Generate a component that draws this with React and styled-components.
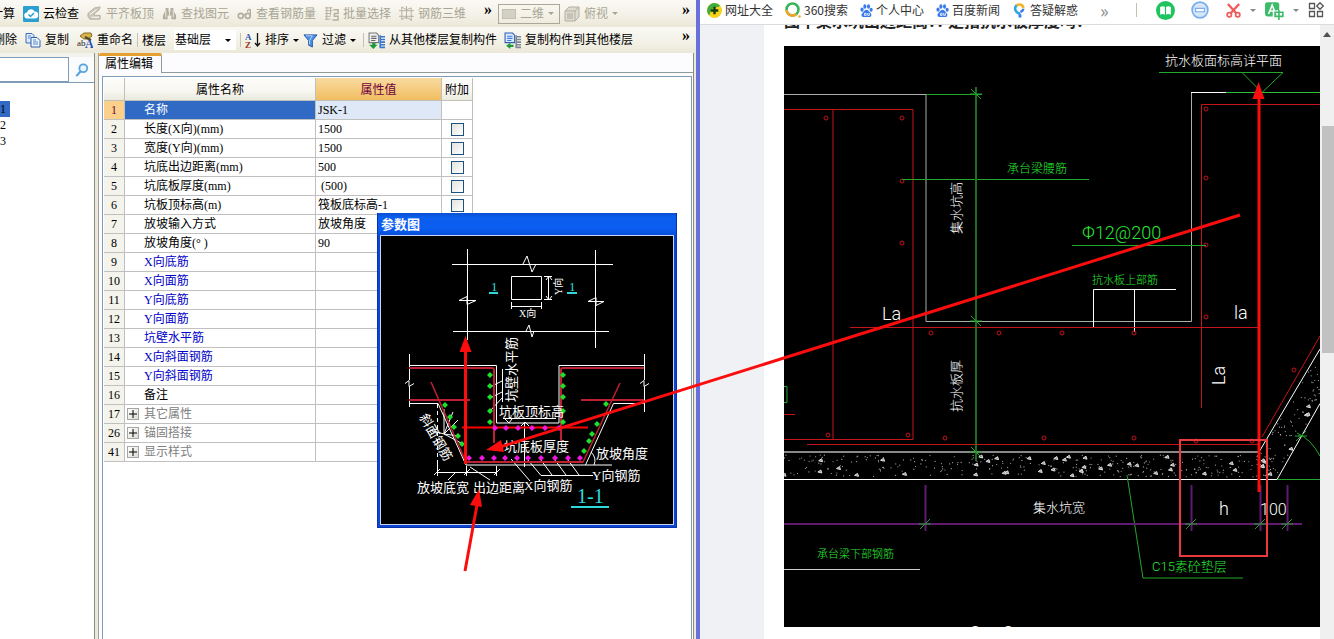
import React from 'react';
import styled, { createGlobalStyle } from 'styled-components';

const GlobalStyle = createGlobalStyle`
  * {
    box-sizing: border-box;
  }
  body {
    margin: 0;
    overflow: hidden;
    background: #fff;
    font-family: 'Liberation Serif', 'Noto Sans CJK SC', sans-serif;
    font-size: 12px;
    color: #000;
  }
  button, input, select {
    margin: 0;
    padding: 0;
    border: 0;
    background: none;
    font: inherit;
    color: inherit;
  }
`;

const Desktop = styled.div`
  position: relative;
  display: grid;
  grid-template-columns: 700fr 634fr;
  height: 100vh;
`;

/* ---- modelling application ---- */

const AppWindow = styled.div`
  display: flex;
  flex-direction: column;
  min-width: 0;
  border-right: 4px solid #6870dc;
  background: #ece9d8;
`;

const Toolbar = styled.div`
  display: flex;
  flex: none;
  align-items: center;
  height: ${({ height }) => height}px;
  overflow: hidden;
  white-space: nowrap;
  background: linear-gradient(#faf9f4, #f3f1e6 60%, #ebe8d8);
`;

const Group = styled.div`
  display: flex;
  align-items: center;
  height: 100%;
  gap: ${({ gap }) => gap || 8}px;
  padding: 0 4px 0 ${({ indent }) => indent || 0}px;
  flex: ${({ grow }) => (grow ? 1 : 'none')};
`;

const ToolButton = styled.button`
  display: flex;
  align-items: center;
  gap: 4px;
  line-height: 18px;
  color: ${({ disabled }) => (disabled ? '#a9a594' : '#000')};
  svg {
    flex: none;
  }
`;

const CutButton = styled(ToolButton)`
  justify-content: flex-end;
  width: ${({ width }) => width}px;
  overflow: hidden;
`;

const More = styled.button`
  margin-left: ${({ inline }) => (inline ? '0' : 'auto')};
  width: 12px;
  height: 22px;
  font-weight: bold;
  font-size: 16px;
  line-height: 12px;
  padding-bottom: 8px;
`;

const Divider = styled.span`
  width: 1px;
  height: 14px;
  background: #c5c2b2;
`;

const Caret = styled.i`
  flex: none;
  width: 0;
  height: 0;
  border: 3px solid transparent;
  border-top-color: ${({ color }) => color || '#000'};
  border-bottom: 0;
`;

const ComboBox = styled.label`
  display: flex;
  align-items: center;
  gap: 4px;
  width: 62px;
  height: 20px;
  padding: 0 5px 0 ${({ muted }) => (muted ? 3 : 1)}px;
  border: ${({ muted }) => (muted ? '1px solid #aca899' : 0)};
  background: ${({ muted }) => (muted ? 'transparent' : '#fff')};
  color: ${({ muted }) => (muted ? '#a9a594' : '#000')};
  select {
    appearance: none;
    flex: 1;
    min-width: 0;
    line-height: 16px;
    outline: 0;
    opacity: 1;
  }
`;

const Body = styled.div`
  display: flex;
  flex: 1;
  min-height: 0;
`;

const TreePane = styled.div`
  display: flex;
  flex-direction: column;
  flex: none;
  width: 95px;
  padding-top: 4px;
  background: #f3f2ec;
  border-right: 1px solid #8b8c83;
`;

const SearchRow = styled.div`
  display: flex;
  height: 26px;
  border-bottom: 1px solid #7f9db9;
  input {
    width: 69px;
    height: 25px;
    border: 1px solid #7f9db9;
    border-left: 0;
    background: #fff;
  }
  button {
    flex: 1;
    display: flex;
    align-items: center;
    justify-content: center;
    background: #fafbfd;
  }
`;

const TreeList = styled.ul`
  flex: 1;
  margin: 0;
  padding: 18px 0 0;
  list-style: none;
  background: #fff;
`;

const TreeItem = styled.li`
  width: 10px;
  height: 16px;
  line-height: 16px;
  background: ${({ active }) => (active ? '#316ac5' : 'none')};
`;

const Inspector = styled.div`
  display: flex;
  flex-direction: column;
  flex: 1;
  min-width: 0;
  margin: 0 2px 0 3px;
  border-left: 1px solid #9da3a5;
  border-right: 1px solid #8b8c83;
  background: #fcfcfe;
`;

const TabStrip = styled.div`
  height: 20px;
  flex: none;
  border-bottom: 1px solid #919b9c;
`;

const Tab = styled.button`
  display: block;
  height: 20px;
  padding: 0 8px 0 6px;
  line-height: 17px;
  border-top: 3px solid #e5a02f;
  border-right: 1px solid #919b9c;
  border-radius: 2px 2px 0 0;
  background: #fcfcfe;
`;

const GridFrame = styled.div`
  flex: 1;
  min-height: 0;
  margin: 3px 1px 0 3px;
  padding: 1px 0 0 1px;
  border: 1px solid #7f9db9;
  border-bottom: 0;
  background: #fff;
`;

const PropertyTable = styled.table`
  table-layout: fixed;
  width: 369px;
  border-spacing: 0;
  white-space: nowrap;
`;

const HeadCell = styled.th`
  height: 23px;
  padding: 0;
  font-weight: normal;
  border-right: 1px solid #c0c0b8;
  border-bottom: 1px solid #c0c0b8;
  color: ${({ active }) => (active ? '#70003c' : '#000')};
  background: ${({ active }) =>
    active ? 'linear-gradient(#f8dba0, #f1bd60)' : 'linear-gradient(#fdfdfb, #f7f6f0 60%, #ebeade)'};
`;

const Cell = styled.td`
  height: 19px;
  padding: 0 0 0 ${({ indent }) => indent || 0}px;
  line-height: 18px;
  border-right: 1px solid #c0c0c0;
  border-bottom: 1px solid #c0c0c0;
  text-align: ${({ center }) => (center ? 'center' : 'left')};
  color: ${({ tone }) => tone || '#000'};
  background: ${({ fill }) => fill || '#fff'};
`;

const ValueCell = styled(Cell)`
  white-space: pre;
`;

const NameLine = styled.div`
  display: flex;
  align-items: center;
  height: 18px;
  gap: 5px;
  padding-left: ${({ group }) => (group ? 2 : 19)}px;
`;

const Expander = styled.button`
  display: grid;
  place-items: center;
  width: 12px;
  height: 12px;
  border: 1px solid #a5a5a5;
  background: linear-gradient(135deg, #fff, #dcdcd4);
`;

const Tick = styled.input`
  appearance: none;
  display: block;
  width: 13px;
  height: 13px;
  margin: 0 auto;
  border: 1px solid #1c5180;
  background: linear-gradient(135deg, #e2e2de, #fff);
`;

/* ---- floating parameter window ---- */

const ParamWindow = styled.section`
  position: absolute;
  left: 377px;
  top: 213px;
  width: 300px;
  padding: 0 2px 2px;
  background: #0c45cf;
  border: 1px solid #0831b0;
  border-top: 0;
`;

const ParamTitle = styled.h2`
  height: 22px;
  margin: 0 -2px;
  padding: 2px 3px 0;
  font-size: 13px;
  line-height: 20px;
  color: #fff;
  background: linear-gradient(#0a4fd0, #0b5fee 20%, #0a5df0 70%, #0650dc);
`;

const Drawing = styled.svg`
  display: block;
  width: 100%;
  background: #000;
  font-family: 'Roboto', 'Liberation Sans', 'Noto Sans CJK SC', sans-serif;
  font-weight: 300;
`;

const ParamDrawing = styled(Drawing)`
  border: 1px solid #c9d4f4;
  font-family: 'Liberation Serif', 'Noto Sans CJK SC', sans-serif;
  font-weight: 400;
`;

/* ---- browser ---- */

const Browser = styled.div`
  display: flex;
  flex-direction: column;
  min-width: 0;
  min-height: 0;
  background: #fff;
`;

const Bookmarks = styled.nav`
  display: flex;
  align-items: center;
  flex: none;
  height: 25px;
  padding: 0 10px 4px 7px;
  gap: 12px;
  border-bottom: 1px solid #dcdcdc;
  font-family: 'Noto Sans CJK SC', sans-serif;
  white-space: nowrap;
`;

const Bookmark = styled.a`
  display: flex;
  align-items: center;
  gap: 3px;
  color: #333;
  text-decoration: none;
  line-height: 18px;
`;

const Actions = styled.div`
  display: flex;
  align-items: center;
  gap: 9px;
  margin-left: auto;
  button {
    display: flex;
    align-items: center;
  }
`;

const ActionPair = styled.div`
  display: flex;
  align-items: center;
  gap: 16px;
  margin: 0 8px 0 10px;
`;

const Chevron = styled.button`
  margin-left: 10px;
  color: #888;
  font-size: 18px;
  line-height: 16px;
`;

const Viewport = styled.div`
  display: flex;
  flex: 1;
  min-height: 0;
  overflow: hidden;
`;

const Gutter = styled.div`
  flex: none;
  width: 64px;
  background: #f0f1f4;
`;

const Article = styled.article`
  flex: 1;
  min-width: 0;
  padding-left: 20px;
`;

const Question = styled.h1`
  display: flex;
  align-items: flex-end;
  height: 5px;
  margin: 0 0 16px;
  overflow: hidden;
  font: bold 16px/20px 'Noto Sans CJK SC', sans-serif;
  color: #222;
  white-space: pre;
`;

const ScrollBar = styled.div`
  flex: none;
  width: 14px;
  background: #f0f0f0;
`;

const ScrollUp = styled.button`
  display: grid;
  place-items: center;
  width: 100%;
  height: 19px;
`;

const Thumb = styled.div`
  height: 37%;
  margin: 82px 0 0 2px;
  background: #c1c1c1;
`;

const Annotations = styled.svg`
  position: absolute;
  left: 0;
  top: 0;
  pointer-events: none;
`;

const grey = '#b3afa0';

const Icon = ({ size = 15, children }) => (
  <svg width={size} height={size} viewBox="0 0 16 16" fill="none" aria-hidden="true">
    {children}
  </svg>
);

const CloudCheck = () => (
  <Icon size={16}>
    <rect width="16" height="16" rx="1" fill="#2b9fd0" />
    <path d="M4.5 12.5a3 3 0 0 1-.5-6A4 4 0 0 1 11.5 5.5a3.5 3.5 0 0 1 .5 7z" fill="#fff" />
    <path d="M5.5 8.5l2 2 3.5-3.5" stroke="#2b9fd0" strokeWidth="1.5" />
  </Icon>
);

const AlignSlab = () => (
  <Icon>
    <path d="M1 8l7-6 6-1-1 3-5 4v2h6v4H3l-2-3z" fill="#cbc8bb" stroke={grey} />
    <path d="M3 9l7-5M5 12h8" stroke="#fff" />
  </Icon>
);

const Binoculars = () => (
  <Icon>
    <path d="M4 2h3v4h2V2h3l1 4 2 4v4h-5v-4H6v4H1v-4l2-4z" fill={grey} />
    <path d="M4 4v8M12 4v8M8 6v4" stroke="#efede2" />
  </Icon>
);

const Glasses = () => (
  <Icon>
    <circle cx="4" cy="10.5" r="2.7" stroke={grey} strokeWidth="1.8" />
    <circle cx="11.5" cy="10.5" r="2.7" stroke={grey} strokeWidth="1.8" />
    <path d="M6.5 9.5h2.5M14.2 10V4q-3-1-3 2" stroke={grey} strokeWidth="1.5" />
  </Icon>
);

const BatchSelect = () => (
  <Icon>
    <path d="M1 2h8M1 5h8M1 8h6M1 11h6M1 14h6M3 1v14M7 1v9" stroke={grey} />
    <path d="M10 4h5v4h-4v3h4v4H9" stroke={grey} strokeWidth="1.5" />
  </Icon>
);

const Rebar3d = () => (
  <Icon>
    <path d="M0 5h16M0 11h16M3 1v14M8 0v14M13 2v14M3 1l5 3 5-2M3 14l5-2 5 3" stroke={grey} />
  </Icon>
);

const Cube = () => (
  <Icon size={16}>
    <path d="M1 5l4-4h10v10l-4 4H1z" fill="#dedbd0" stroke={grey} />
    <path d="M1 5h10v10M11 5l4-4" stroke={grey} />
    <path d="M3 7h6v6H3z" fill="#c6c3b6" />
  </Icon>
);

const Copy = () => (
  <Icon size={16}>
    <path d="M1 1.5h6l2 2V11H1z" fill="#dce9fb" stroke="#3f6fb5" />
    <path d="M6 5.5h6l3 3V15H6z" fill="#eef5ff" stroke="#2e5fae" />
    <path d="M3 4h3M3 6h2M8 8h3M8 10h5M8 12h5" stroke="#5b8bd0" />
  </Icon>
);

const Rename = () => (
  <Icon size={16}>
    <path d="M3 4l4-3h7l1 3-4 3H7z" fill="#d8b24a" stroke="#8a6d20" />
    <path d="M8 5l6 3" stroke="#4a4a30" strokeWidth="2" />
    <text x="0" y="14" fontSize="9" fill="#222">ab</text>
    <text x="8" y="16" fontSize="12" fontWeight="bold" fill="#1e50b8">A</text>
  </Icon>
);

const Sort = () => (
  <Icon size={16}>
    <text x="0" y="8" fontSize="9" fontWeight="bold" fill="#2b57b0">A</text>
    <text x="0" y="16" fontSize="9" fontWeight="bold" fill="#a33224">Z</text>
    <path d="M12.5 1v12M10 11l2.5 3 2.5-3" stroke="#111" strokeWidth="1.3" />
  </Icon>
);

const Funnel = () => (
  <Icon>
    <path d="M1 2h14L10 8v7l-4-2V8z" fill="#4d8fe6" stroke="#2455a8" />
    <path d="M3 3h7L7 8v4" stroke="#b9d6fb" />
  </Icon>
);

const CopyFloor = ({ down }) => (
  <Icon size={17}>
    <path d="M1 1h7l2 2v7H1z" fill={down ? '#dce9fb' : '#eee'} stroke={down ? '#2e5fae' : '#777'} />
    <path d="M3 4h5M3 6h5M3 8h4" stroke={down ? '#3a7be0' : '#666'} />
    <path
      d="M11 4.5h5M11 7h5M11 9.5h5M11 12h5M11 14.5h5M11.5 3v12"
      stroke={down ? '#7d8794' : '#3878cc'}
      strokeWidth="1.5"
    />
    <path d={down ? 'M9 12H6v-2l-4 3 4 3v-2h3z' : 'M4 10h3v2h2l-4 4-4-4h3z'} fill="#1f9a3a" />
  </Icon>
);

const Paw = () => (
  <Icon size={13}>
    <ellipse cx="2.5" cy="7" rx="2" ry="2.6" fill="#3a7bec" />
    <ellipse cx="6" cy="3" rx="1.9" ry="2.7" fill="#3a7bec" />
    <ellipse cx="10.5" cy="3" rx="1.9" ry="2.7" fill="#3a7bec" />
    <ellipse cx="13.7" cy="7" rx="1.9" ry="2.5" fill="#3a7bec" />
    <path d="M8 7c2 0 3 2 5 4s1 5-1.5 5c-1.5 0-5-.3-7 0-3 .2-3.5-3-1.5-5S6 7 8 7z" fill="#3a7bec" />
    <path d="M5.5 11.5h2v2.5h-2zM9.5 11v3h2v-3" stroke="#fff" />
  </Icon>
);

const bookmarks = [
  {
    label: '网址大全',
    icon: (
      <Icon>
        <circle cx="8" cy="8" r="8" fill="#f5d21c" />
        <path d="M8 0a8 8 0 0 0-6 13c2-1 1-5 4-7s6-1 8-3A8 8 0 0 0 8 0z" fill="#3fae3c" />
        <path d="M8 4v8M4 8h8" stroke="#123c12" strokeWidth="2.5" />
      </Icon>
    ),
  },
  {
    label: '360搜索',
    icon: (
      <Icon size={16}>
        <circle cx="7.5" cy="7.5" r="6" stroke="#36b558" strokeWidth="2.5" />
        <path d="M1.5 8a6 6 0 0 0 10 4" stroke="#f3a52a" strokeWidth="2.5" />
        <circle cx="14.5" cy="14.5" r="1.2" fill="#f3a52a" />
      </Icon>
    ),
  },
  { label: '个人中心', icon: <Paw /> },
  { label: '百度新闻', icon: <Paw /> },
  {
    label: '答疑解惑',
    icon: (
      <Icon>
        <path d="M9 11.5C3 10.5 2 5 5 2.5" stroke="#2fa5e8" strokeWidth="2.8" />
        <path d="M5 2.5c3-2 7-.5 7 3" stroke="#f4b22a" strokeWidth="2.8" />
        <path d="M12 6c0 2-2 3-3 3.5" stroke="#3a7bec" strokeWidth="2.5" />
        <path d="M7 12h3v3.5H7z" fill="#2f7fe8" />
      </Icon>
    ),
  },
];

const rows = [
  { no: 1, name: '名称', value: 'JSK-1', selected: true },
  { no: 2, name: '长度(X向)(mm)', value: '1500', tick: true },
  { no: 3, name: '宽度(Y向)(mm)', value: '1500', tick: true },
  { no: 4, name: '坑底出边距离(mm)', value: '500', tick: true },
  { no: 5, name: '坑底板厚度(mm)', value: ' (500)', tick: true },
  { no: 6, name: '坑板顶标高(m)', value: '筏板底标高-1', tick: true },
  { no: 7, name: '放坡输入方式', value: '放坡角度', tick: true },
  { no: 8, name: '放坡角度(° )', value: '90', tick: true },
  { no: 9, name: 'X向底筋', rebar: true },
  { no: 10, name: 'X向面筋', rebar: true },
  { no: 11, name: 'Y向底筋', rebar: true },
  { no: 12, name: 'Y向面筋', rebar: true },
  { no: 13, name: '坑壁水平筋', rebar: true },
  { no: 14, name: 'X向斜面钢筋', rebar: true },
  { no: 15, name: 'Y向斜面钢筋', rebar: true },
  { no: 16, name: '备注' },
  { no: 17, name: '其它属性', group: true },
  { no: 26, name: '锚固搭接', group: true },
  { no: 41, name: '显示样式', group: true },
];

const nameTone = ({ selected, rebar, group }) => {
  if (selected) return '#fff';
  if (rebar) return '#0000c8';
  return group ? '#808080' : '#000';
};

const PropertyGrid = () => (
  <PropertyTable>
    <colgroup>
      <col width="21" />
      <col width="191" />
      <col width="126" />
      <col width="31" />
    </colgroup>
    <thead>
      <tr>
        <HeadCell aria-label="序号" />
        <HeadCell>属性名称</HeadCell>
        <HeadCell active>属性值</HeadCell>
        <HeadCell>附加</HeadCell>
      </tr>
    </thead>
    <tbody>
      {rows.map((row) => (
        <tr key={row.no}>
          <Cell center fill={row.selected ? '#fbd08a' : '#f5f4ec'} tone={row.selected ? '#70003c' : '#000'}>
            {row.no}
          </Cell>
          <Cell fill={row.selected ? '#316ac5' : '#fff'} tone={nameTone(row)}>
            <NameLine group={row.group}>
              {row.group && (
                <Expander aria-label={row.name}>
                  <svg width="8" height="8">
                    <path d="M4 0v8M0 4h8" stroke="#000" />
                  </svg>
                </Expander>
              )}
              {row.name}
            </NameLine>
          </Cell>
          <ValueCell indent={2} fill={row.selected ? '#dfe8f6' : '#fff'}>
            {row.value}
          </ValueCell>
          <Cell>{row.tick && <Tick type="checkbox" aria-label={row.name} />}</Cell>
        </tr>
      ))}
    </tbody>
  </PropertyTable>
);

const dots = (points, fill) =>
  points.map(([x, y]) => (
    <path key={`${x}-${y}`} d={`M${x - 3} ${y}l3-3 3 3-3 3z`} fill={fill} />
  ));

const ParamSection = () => (
  <ParamDrawing viewBox="381 236 292 288" fill="none" fontSize="13">
    <g stroke="#fff">
      <path d="M467.5 249v91M595.5 250v98M452 264.5h161M453 331.5h156" />
      <path d="M523 264l4-8 5 16 4-8M526 331l3-6 3 12 2-6" />
      <path d="M476 300.5h-17l8-4v8zM604 301.5h-16l8-4v8z" />
      <path d="M511.5 276.5h30v23h-30zM548.5 276v24M544 276.5h8M544 299.5h8M511 306.5h31M511.5 302v7M541.5 302v7M546 280l3-4 3 4M546 296l3 4 3-4" />
      <path d="M409.5 354v26M409.5 386v21M405 383.5l4-3v6l5-3M644.5 354v26M644.5 386v26M640 383.5l4-3v6l5-3" />
      <path d="M409 365.5h87.5v57.5H559v-57.5h85M409 403.5h29l28 61.5h146M585.5 465l28-61.5h31" />
      <path d="M524.5 422v45M502.5 369v33M490 387l12-6M490 398l12-6M490 411l12-13M503 418.5h53M505 419l4 4 3-4M521 426l4-4 4 4" />
      <path d="M437.5 404v60" strokeDasharray="4 3" />
      <path d="M437.5 464v12M466.5 466v10M496.5 466v10M437 472.5h60M434 475l6-6M464 475l6-6M494 475l6-6M470 467l20 13M456 472l-8 8" />
      <path d="M444 409v25l19 10M444 434l14-14M444 434l15 2M444 434l9-22M430 430l14 4" />
      <path d="M511 459l19 22M528 460l13 15.5h52M541 460l11 15M555 460l11 15M568 460l11 15M591 452q6 6 3 13" />
    </g>
    <g stroke="#bf2030" strokeWidth="2">
      <path d="M409 368h83q2 0 2 2v73M409 400h61M644 368h-81q-2 0-2 2v71M581 400h63" />
      <path d="M431 382l35 80h117l37-79" strokeWidth="1.5" />
      <path d="M466 462h117" />
    </g>
    <path d="M462 427.5h126" stroke="#f00" strokeWidth="2" />
    {dots([[490, 375], [490, 386], [490, 397], [490, 411], [490, 422], [563, 375], [563, 386], [563, 397], [563, 411], [563, 422]], '#1ee02c')}
    {dots([[445, 405], [450, 417], [454, 427], [458, 436], [462, 444], [606, 404], [597, 424], [592, 434], [589, 441], [584, 451]], '#1ee02c')}
    {dots([469, 482, 494, 505, 517, 528, 541, 555, 568, 580].map((x) => [x, 458]), '#f018e0')}
    {dots([495, 506, 518, 532, 545, 559].map((x) => [x, 428]), '#f018e0')}
    <g fill="#fff">
      <text x="519" y="317" fontSize="10">X向</text>
      <text transform="translate(562 295) rotate(-90)" fontSize="10">Y向</text>
      <text transform="translate(516 402) rotate(-90)">坑壁水平筋</text>
      <text transform="translate(419 417) rotate(60)">斜面钢筋</text>
      <text x="499" y="416">坑板顶标高</text>
      <text x="504" y="451">坑底板厚度</text>
      <text x="596" y="458">放坡角度</text>
      <text x="592" y="480">Y向钢筋</text>
      <text x="524" y="490">X向钢筋</text>
      <text x="417" y="492">放坡底宽</text>
      <text x="473" y="492">出边距离</text>
    </g>
    <g fill="#2fd8d8">
      <text x="491" y="291">1</text>
      <text x="569" y="291">1</text>
      <text x="577" y="503" fontSize="20">1-1</text>
    </g>
    <path d="M489 293h9M567 293h10M571 507h38" stroke="#2fd8d8" strokeWidth="2" />
  </ParamDrawing>
);

// aggregate speckle of the concrete cushion layer
const speckles = [];
let seed = 7;
const rnd = () => {
  seed = (seed * 16807) % 2147483647;
  return seed / 2147483647;
};
for (let i = 0; i < 330; i += 1) {
  const x = 784 + rnd() * 476;
  const y = 455 + rnd() * 22;
  speckles.push([x, y, i % 9 === 0]);
}
for (let i = 0; i < 110; i += 1) {
  const y = 476 - rnd() * 112;
  const left = y > 452 ? 1260 : 1261 + (452 - y) * 0.592;
  const right = 1275 + (479 - y) * 0.573;
  const x = left + rnd() * (right - left);
  speckles.push([x, y, i % 12 === 0]);
}

const tick = (x, y) => `M${x - 5} ${y + 5}l10-10M${x - 6} ${y}h12`;
const backTick = (x, y) => `M${x - 5} ${y - 5}l10 10M${x - 6} ${y}h12`;

const rebarHoles = [
  [826, 118], [902, 118], [902, 181], [902, 243], [828, 435], [908, 435],
  [931, 333], [999, 333], [1062, 333], [1134, 333], [945, 438], [1044, 438], [1134, 438],
  [1196, 441], [1252, 441], [1206, 109], [1206, 178], [1206, 245], [1206, 317], [1294, 370],
];

const PitDetail = () => (
  <Drawing viewBox="784 46 536 581" fill="none" fontSize="13">
    {speckles.map(([x, y, big], i) =>
      big ? (
        <path key={i} d={`M${x - 2} ${y}l3-2 1 3z`} stroke="#ddd" fill="#999" />
      ) : (
        <circle key={i} cx={x} cy={y} r="0.6" fill="#aaa" />
      ),
    )}
    <g stroke="#a8b0a8">
      <path d="M784 94.5h142v227h265.5v-229" />
      <path d="M784 452h475" strokeWidth="2" stroke="#888" />
      <path d="M784 569.5h136" stroke="#ccc" />
    </g>
    <g stroke="#fff">
      <path d="M1191 92.5h36M784 479.5h493l43-76M1259 452l61-103M1093.5 327v-37.5h82.5M1134.5 290v42" />
    </g>
    <g stroke="#c4141c">
      <path d="M784 109.5h129v330H784M833 109v330" />
      <path d="M850 327.5h410M807 444.5h453M1201.5 408V104.5H1320M1262 437l58-101M784 414.5h11" />
      {rebarHoles.map(([x, y]) => (
        <circle key={`${x}-${y}`} cx={x} cy={y} r="2" />
      ))}
    </g>
    <g stroke="#22a82a">
      <path d="M926 94.5h56M902 179.5h187M1072 245.5h134M1159 72.5h124l-21 20-20-20M1127 475l16 103h100M1277 479.5h43M784 386.5h3v16h-3M1297 433q14 6 23 23" />
      <path d="M976 87v374" strokeWidth="2" stroke="#1c6e22" />
      <path d="M1226 92.5h94" stroke="#2fbf35" />
      <path d={backTick(976, 94) + backTick(976, 321) + backTick(976, 452) + tick(1301, 436)} />
    </g>
    <g stroke="#601a70" strokeWidth="2">
      <path d="M784 524h518" />
      <path d="M925.5 485v46M1191.5 485v46M1260.5 485v46M1287.5 485v46" />
    </g>
    <path d={[925, 1191, 1260, 1287].map((x) => tick(x, 524)).join('')} stroke="#2a9a30" />
    <g fill="#fff">
      <text x="1165" y="65">抗水板面标高详平面</text>
      <text transform="translate(961 234) rotate(-90)">集水坑高</text>
      <text transform="translate(961 412) rotate(-90)">抗水板厚</text>
      <text x="1033" y="512">集水坑宽</text>
      <text x="882" y="320" fontSize="18">La</text>
      <text x="1234" y="319" fontSize="18">la</text>
      <text transform="translate(1225 385) rotate(-90)" fontSize="18">La</text>
      <text x="1219" y="515" fontSize="18">h</text>
      <text x="1260" y="515" fontSize="16">100</text>
      <text x="969" y="639" fontSize="18">C</text>
      <text x="1002" y="639" fontSize="18">C</text>
    </g>
    <g fill="#2ae634">
      <text x="1007" y="173" fontSize="12">承台梁腰筋</text>
      <text x="1082" y="239" fontSize="18">Φ12@200</text>
      <text x="1092" y="284" fontSize="11">抗水板上部筋</text>
      <text x="817" y="558" fontSize="11">承台梁下部钢筋</text>
      <text x="1152" y="571">C15素砼垫层</text>
    </g>
  </Drawing>
);

const App = () => (
  <Desktop>
    <GlobalStyle />
    <AppWindow>
      <Toolbar height={27}>
        <Group>
          <CutButton width={15}>汇总计算</CutButton>
          <ToolButton><CloudCheck />云检查</ToolButton>
          <ToolButton disabled><AlignSlab />平齐板顶</ToolButton>
          <ToolButton disabled><Binoculars />查找图元</ToolButton>
          <ToolButton disabled><Glasses />查看钢筋量</ToolButton>
          <ToolButton disabled><BatchSelect />批量选择</ToolButton>
          <ToolButton disabled><Rebar3d />钢筋三维</ToolButton>
        </Group>
        <Group gap={4} indent={12} grow>
          <More inline aria-label="更多">»</More>
          <ComboBox muted>
            <svg width="14" height="10">
              <rect width="14" height="10" fill="#d3d0c4" stroke={grey} />
            </svg>
            <select aria-label="视图" disabled>
              <option>二维</option>
            </select>
            <Caret color="#a9a594" />
          </ComboBox>
          <ToolButton disabled><Cube />俯视</ToolButton>
          <Caret color="#a9a594" />
          <More aria-label="更多视图">»</More>
        </Group>
      </Toolbar>
      <Toolbar height={26}>
        <Group>
          <CutButton width={17}>删除</CutButton>
          <ToolButton><Copy />复制</ToolButton>
          <ToolButton><Rename />重命名</ToolButton>
        </Group>
        <Group gap={4}>
          <Divider />
          <label htmlFor="floor">楼层</label>
        </Group>
        <Group indent={4}>
          <ComboBox as="div">
            <select id="floor">
              <option>基础层</option>
            </select>
            <Caret />
          </ComboBox>
        </Group>
        <Group gap={4}>
          <Divider />
          <ToolButton><Sort />排序<Caret /></ToolButton>
        </Group>
        <Group gap={7}>
          <ToolButton><Funnel />过滤<Caret /></ToolButton>
          <Divider />
        </Group>
        <Group gap={7} grow>
          <ToolButton><CopyFloor />从其他楼层复制构件</ToolButton>
          <ToolButton><CopyFloor down />复制构件到其他楼层</ToolButton>
          <More aria-label="更多构件命令">»</More>
        </Group>
      </Toolbar>
      <Body>
        <TreePane>
          <SearchRow>
            <input type="text" aria-label="搜索构件" />
            <button aria-label="搜索">
              <Icon size={14}>
                <circle cx="9.5" cy="6" r="4.5" stroke="#5aa2dc" strokeWidth="2" fill="#eaf5ff" />
                <path d="M6.5 9.5L1.5 15" stroke="#5aa2dc" strokeWidth="2.5" />
              </Icon>
            </button>
          </SearchRow>
          <TreeList>
            <TreeItem active>1</TreeItem>
            <TreeItem>2</TreeItem>
            <TreeItem>3</TreeItem>
          </TreeList>
        </TreePane>
        <Inspector>
          <TabStrip>
            <Tab>属性编辑</Tab>
          </TabStrip>
          <GridFrame>
            <PropertyGrid />
          </GridFrame>
        </Inspector>
      </Body>
    </AppWindow>

    <Browser>
      <Bookmarks>
        {bookmarks.map(({ label, icon }) => (
          <Bookmark key={label} href="#">
            {icon}
            {label}
          </Bookmark>
        ))}
        <Chevron aria-label="更多书签">»</Chevron>
        <Actions>
          <Divider />
          <ActionPair>
            <button aria-label="阅读">
              <Icon size={19}>
                <circle cx="8" cy="8" r="8" fill="#1fc45e" />
                <path d="M3.5 5q2.5-1 4 0v6.5q-2-1-4 0zM12.5 5q-2.5-1-4 0v6.5q2-1 4 0z" fill="#fff" />
              </Icon>
            </button>
            <button aria-label="缩小">
              <Icon size={18}>
                <circle cx="8" cy="8" r="7" fill="#d5e7fb" stroke="#79adeb" strokeWidth="1.5" />
                <path d="M4 6.5h8v3H4z" fill="#fff" stroke="#79adeb" />
              </Icon>
            </button>
          </ActionPair>
          <button aria-label="截图">
            <Icon size={15}>
              <path d="M2 1l9 10M14 1L5 11" stroke="#ef5a5a" strokeWidth="2.5" />
              <circle cx="3.5" cy="12.5" r="2.3" stroke="#ef5a5a" strokeWidth="1.8" />
              <circle cx="12.5" cy="12.5" r="2.3" stroke="#ef5a5a" strokeWidth="1.8" />
            </Icon>
          </button>
          <Caret color="#888" />
          <button aria-label="翻译">
            <Icon size={19}>
              <rect y="1" width="12" height="12" rx="2" fill="#3dbb69" />
              <path d="M3 11l3-7.5L9 11M4 8.5h4" stroke="#fff" strokeWidth="1.3" />
              <path d="M8 9.5h7v3.5H8zM11.5 7.5V16" stroke="#fff" strokeWidth="3" />
              <path d="M8.5 9.5h6.5v3.5H8.5zM11.7 7.5V16" stroke="#3dbb69" strokeWidth="1.4" />
            </Icon>
          </button>
          <Caret color="#888" />
          <button aria-label="扩展">
            <Icon size={16}>
              <path d="M1.5 1.5h5v5h-5zM1.5 9.5h5v5h-5zM9.5 9.5h5v5h-5zM12 .7L15.3 4 12 7.3 8.7 4z" stroke="#555" strokeWidth="1.3" />
            </Icon>
          </button>
        </Actions>
      </Bookmarks>
      <Viewport>
        <Gutter />
        <Article>
          <Question>图中集水坑出边距离?? 是指抗水板厚度吗?</Question>
          <PitDetail />
        </Article>
        <ScrollBar>
          <ScrollUp aria-label="向上滚动">
            <svg width="8" height="5">
              <path d="M0 5l4-5 4 5z" fill="#505050" />
            </svg>
          </ScrollUp>
          <Thumb />
        </ScrollBar>
      </Viewport>
    </Browser>

    <ParamWindow>
      <ParamTitle>参数图</ParamTitle>
      <ParamSection />
    </ParamWindow>

    <Annotations width="1334" height="639" fill="none" aria-hidden="true">
      <path d="M465.5 464V350M1240 215L500 447M465 571l12-66M1259 492V98" stroke="#fb0d0d" strokeWidth="3" />
      <path d="M465.5 336l6 16h-12zM486 450l15-10 3 12zM479 489l3 18-12-2zM1258.5 82l6 17h-12z" fill="#fb0d0d" />
      <rect x="1180" y="440" width="87" height="116" stroke="#ea3a3e" strokeWidth="2" />
    </Annotations>
  </Desktop>
);

export default App;
